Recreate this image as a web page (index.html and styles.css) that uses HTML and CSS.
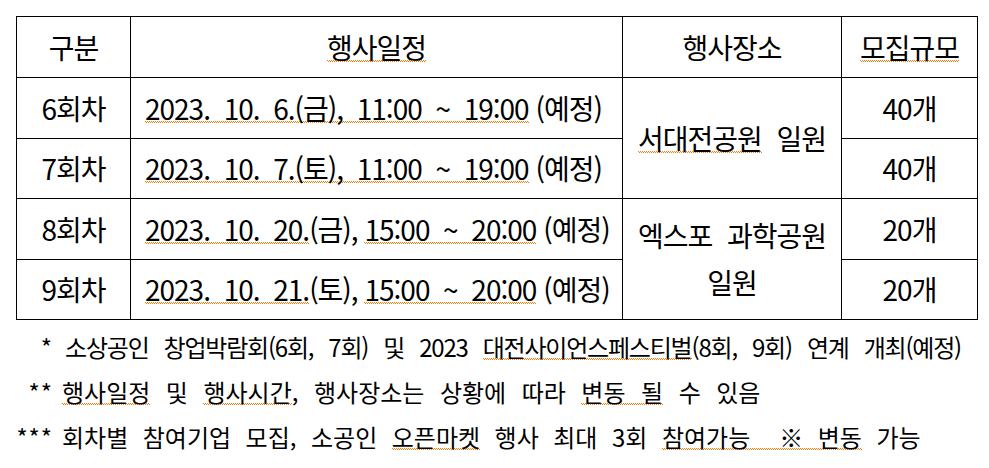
FILE: index.html
```html
<!DOCTYPE html>
<html lang="ko">
<head>
<meta charset="utf-8">
<title>행사일정</title>
<link rel="stylesheet" href="styles.css">
</head>
<body>
<div class="page">
  <table class="schedule">
    <colgroup>
      <col class="c1"><col class="c2"><col class="c3"><col class="c4">
    </colgroup>
    <thead>
      <tr class="r-head">
        <th>구분</th>
        <th><span class="sp">행사일정</span></th>
        <th>행사장소</th>
        <th><span class="sp">모집규모</span></th>
      </tr>
    </thead>
    <tbody>
      <tr class="r-a">
        <td>6회차</td>
        <td class="date"><span class="sp">2023.  10.  6.(금),  11:00  ~  19:00</span> (예정)</td>
        <td rowspan="2" class="place"><span class="sp">서대전공원</span> 일원</td>
        <td>40개</td>
      </tr>
      <tr class="r-b">
        <td>7회차</td>
        <td class="date"><span class="sp">2023.  10.  7.(토),  11:00  ~  19:00</span> (예정)</td>
        <td>40개</td>
      </tr>
      <tr class="r-a">
        <td>8회차</td>
        <td class="date"><span class="sp">2023.  10.  20.</span>(금), <span class="sp">15:00  ~  20:00</span> (예정)</td>
        <td rowspan="2" class="place place-two">엑스포 과학공원<br>일원</td>
        <td>20개</td>
      </tr>
      <tr class="r-b">
        <td>9회차</td>
        <td class="date"><span class="sp">2023.  10.  21.</span>(토), <span class="sp">15:00  ~  20:00</span> (예정)</td>
        <td>20개</td>
      </tr>
    </tbody>
  </table>
  <div class="notes">
    <div class="note note-1"><span class="mark">*</span><span class="txt">소상공인 창업박람회(6회, 7회) 및 2023 <span class="sp">대전사이언스페스티벌</span>(8회, 9회) 연계 개최(예정)</span></div>
    <div class="note note-2"><span class="mark">**</span><span class="txt"><span class="sp">행사일정</span> 및 <span class="sp">행사시간</span>, 행사장소는 상황에 따라 <span class="sp">변동 될</span> 수 있음</span></div>
    <div class="note note-3"><span class="mark">***</span><span class="txt">회차별 참여기업 모집, 소공인 <span class="sp">오픈마켓</span> 행사 최대 3회 <span class="sp">참여가능  ※ 변동</span> 가능</span></div>
  </div>
</div>
</body>
</html>
```

FILE: styles.css
```css
html, body {
  margin: 0;
  padding: 0;
  background: #ffffff;
}
body {
  font-family: "Noto Sans CJK KR", "Noto Sans", sans-serif;
  color: #000000;
}
.page {
  padding: 16px 0 0 16px;
}
.schedule {
  border-collapse: collapse;
  table-layout: fixed;
  width: 961px;
  font-size: 28px;
  letter-spacing: -1px;
  word-spacing: 0;
}
.c1 { width: 114px; }
.c2 { width: 492px; }
.c3 { width: 219px; }
.c4 { width: 136px; }
.schedule th,
.schedule td {
  border: 1px solid #000000;
  padding: 0;
  font-weight: normal;
  text-align: center;
  vertical-align: middle;
  line-height: 47px;
  white-space: pre;
}
.r-head { height: 61px; }
.r-a { height: 61px; }
.r-b { height: 60px; }
.schedule td.date {
  text-align: left;
  padding-left: 14px;
}
.schedule td.place {
  word-spacing: 8px;
}
.sp {
  background-image:
    linear-gradient(90deg, #f27f0c 1px, transparent 1px),
    linear-gradient(90deg, transparent 1px, #f27f0c 1px);
  background-size: 2px 1px, 2px 1px;
  background-repeat: repeat-x;
  background-position: 0 calc(100% - 0.2em), 0 calc(100% - 0.2em + 1px);
}
.notes {
  padding-top: 4px;
  font-size: 24px;
  letter-spacing: 0;
}
.note {
  display: flex;
  align-items: baseline;
  height: 45px;
  line-height: 45px;
  white-space: pre;
}
.note-1 {
  letter-spacing: -1.2px;
  word-spacing: 9.5px;
}
.note-2 {
  word-spacing: 8.8px;
}
.note-3 {
  word-spacing: 7.8px;
}
.mark {
  width: 37px;
  text-align: right;
  flex: none;
  letter-spacing: 1px;
  word-spacing: 0;
}
.txt {
  margin-left: 9px;
}
.note-1 .txt {
  margin-left: 12px;
}
```
